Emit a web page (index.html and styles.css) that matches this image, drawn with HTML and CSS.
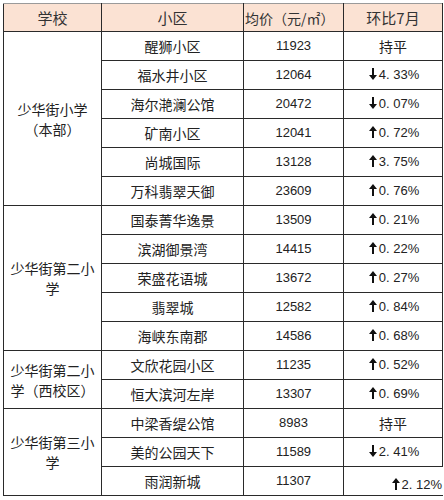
FILE: index.html
```html
<!DOCTYPE html>
<html lang="zh">
<head>
<meta charset="utf-8">
<link rel="stylesheet" href="styles.css">
</head>
<body>
<table class="price-table">
  <colgroup>
    <col class="c-school"><col class="c-area"><col class="c-price"><col class="c-change">
  </colgroup>
  <thead>
    <tr class="head">
      <th>学校</th><th>小区</th><th class="price-h">均价（元/㎡）</th><th>环比7月</th>
    </tr>
  </thead>
  <tbody>
    <tr><td class="school" rowspan="6">少华街小学<br>（本部）</td><td>醒狮小区</td><td class="num">11923</td><td>持平</td></tr>
    <tr><td>福水井小区</td><td class="num">12064</td><td class="pct"><svg class="arr" viewBox="0 0 8 12"><path d="M3 0h2v7h3l-4 5-4-5h3z"/></svg>4. 33%</td></tr>
    <tr><td>海尔滟澜公馆</td><td class="num">20472</td><td class="pct"><svg class="arr" viewBox="0 0 8 12"><path d="M3 0h2v7h3l-4 5-4-5h3z"/></svg>0. 07%</td></tr>
    <tr><td>矿南小区</td><td class="num">12041</td><td class="pct"><svg class="arr" viewBox="0 0 8 12"><path d="M3 12h2V5h3L4 0 0 5h3z"/></svg>0. 72%</td></tr>
    <tr><td>尚城国际</td><td class="num">13128</td><td class="pct"><svg class="arr" viewBox="0 0 8 12"><path d="M3 12h2V5h3L4 0 0 5h3z"/></svg>3. 75%</td></tr>
    <tr><td>万科翡翠天御</td><td class="num">23609</td><td class="pct"><svg class="arr" viewBox="0 0 8 12"><path d="M3 12h2V5h3L4 0 0 5h3z"/></svg>0. 76%</td></tr>

    <tr><td class="school" rowspan="5">少华街第二小学</td><td>国泰菁华逸景</td><td class="num">13509</td><td class="pct"><svg class="arr" viewBox="0 0 8 12"><path d="M3 12h2V5h3L4 0 0 5h3z"/></svg>0. 21%</td></tr>
    <tr><td>滨湖御景湾</td><td class="num">14415</td><td class="pct"><svg class="arr" viewBox="0 0 8 12"><path d="M3 12h2V5h3L4 0 0 5h3z"/></svg>0. 22%</td></tr>
    <tr><td>荣盛花语城</td><td class="num">13672</td><td class="pct"><svg class="arr" viewBox="0 0 8 12"><path d="M3 12h2V5h3L4 0 0 5h3z"/></svg>0. 27%</td></tr>
    <tr><td>翡翠城</td><td class="num">12582</td><td class="pct"><svg class="arr" viewBox="0 0 8 12"><path d="M3 12h2V5h3L4 0 0 5h3z"/></svg>0. 84%</td></tr>
    <tr><td>海峡东南郡</td><td class="num">14586</td><td class="pct"><svg class="arr" viewBox="0 0 8 12"><path d="M3 12h2V5h3L4 0 0 5h3z"/></svg>0. 68%</td></tr>

    <tr><td class="school" rowspan="2">少华街第二小学（西校区）</td><td>文欣花园小区</td><td class="num">11235</td><td class="pct"><svg class="arr" viewBox="0 0 8 12"><path d="M3 12h2V5h3L4 0 0 5h3z"/></svg>0. 52%</td></tr>
    <tr><td>恒大滨河左岸</td><td class="num">13307</td><td class="pct"><svg class="arr" viewBox="0 0 8 12"><path d="M3 12h2V5h3L4 0 0 5h3z"/></svg>0. 69%</td></tr>

    <tr><td class="school" rowspan="3">少华街第三小学</td><td>中梁香缇公馆</td><td class="num">8983</td><td>持平</td></tr>
    <tr><td>美的公园天下</td><td class="num">11589</td><td class="pct"><svg class="arr" viewBox="0 0 8 12"><path d="M3 0h2v7h3l-4 5-4-5h3z"/></svg>2. 41%</td></tr>
    <tr class="last"><td>雨润新城</td><td class="num">11307</td><td class="pct pct-low"><svg class="arr" viewBox="0 0 8 12"><path d="M3 12h2V5h3L4 0 0 5h3z"/></svg>2. 12%</td></tr>
  </tbody>
</table>
</body>
</html>
```

FILE: styles.css
```css
html, body {
  margin: 0;
  padding: 0;
  background: #ffffff;
}
body {
  padding: 3px 0 0 3px;
  font-family: "Noto Sans CJK SC", "Noto Sans", sans-serif;
  color: #222222;
}
.price-table {
  border-collapse: collapse;
  width: 439px;
  table-layout: fixed;
}
.c-school { width: 98px; }
.c-area { width: 142px; }
.c-price { width: 100px; }
.c-change { width: 99px; }

.price-table th,
.price-table td {
  border: 1px solid #2a2a2a;
  padding: 0;
  text-align: center;
  vertical-align: middle;
  font-size: 14px;
  line-height: 20px;
  font-weight: normal;
  white-space: nowrap;
}
.price-table thead tr {
  height: 28px;
}
.price-table thead th {
  background: #fbe2d3;
  font-size: 15px;
  color: #333333;
  border-top-color: #9a9a9a;
}
.price-table th.price-h {
  text-align: left;
  padding-left: 1px;
  font-size: 14px;
}
.price-table tbody tr {
  height: 29px;
}
.price-table td.school {
  white-space: normal;
  padding: 0 5px;
  line-height: 20px;
}
.price-table td.num {
  font-family: "Liberation Sans", Arial, sans-serif;
  font-size: 13px;
}
.price-table td.pct {
  font-family: "Liberation Sans", Arial, sans-serif;
  font-size: 13px;
  padding-left: 2px;
}
.arr {
  width: 8px;
  height: 12px;
  margin-right: 2px;
  vertical-align: -1px;
  fill: #111111;
}
.price-table td.pct-low {
  text-align: right;
  vertical-align: bottom;
  padding: 0 0 2px 0;
  line-height: 16px;
}
.price-table tr.last td.pct-low {
  border-right-color: transparent;
}
```
